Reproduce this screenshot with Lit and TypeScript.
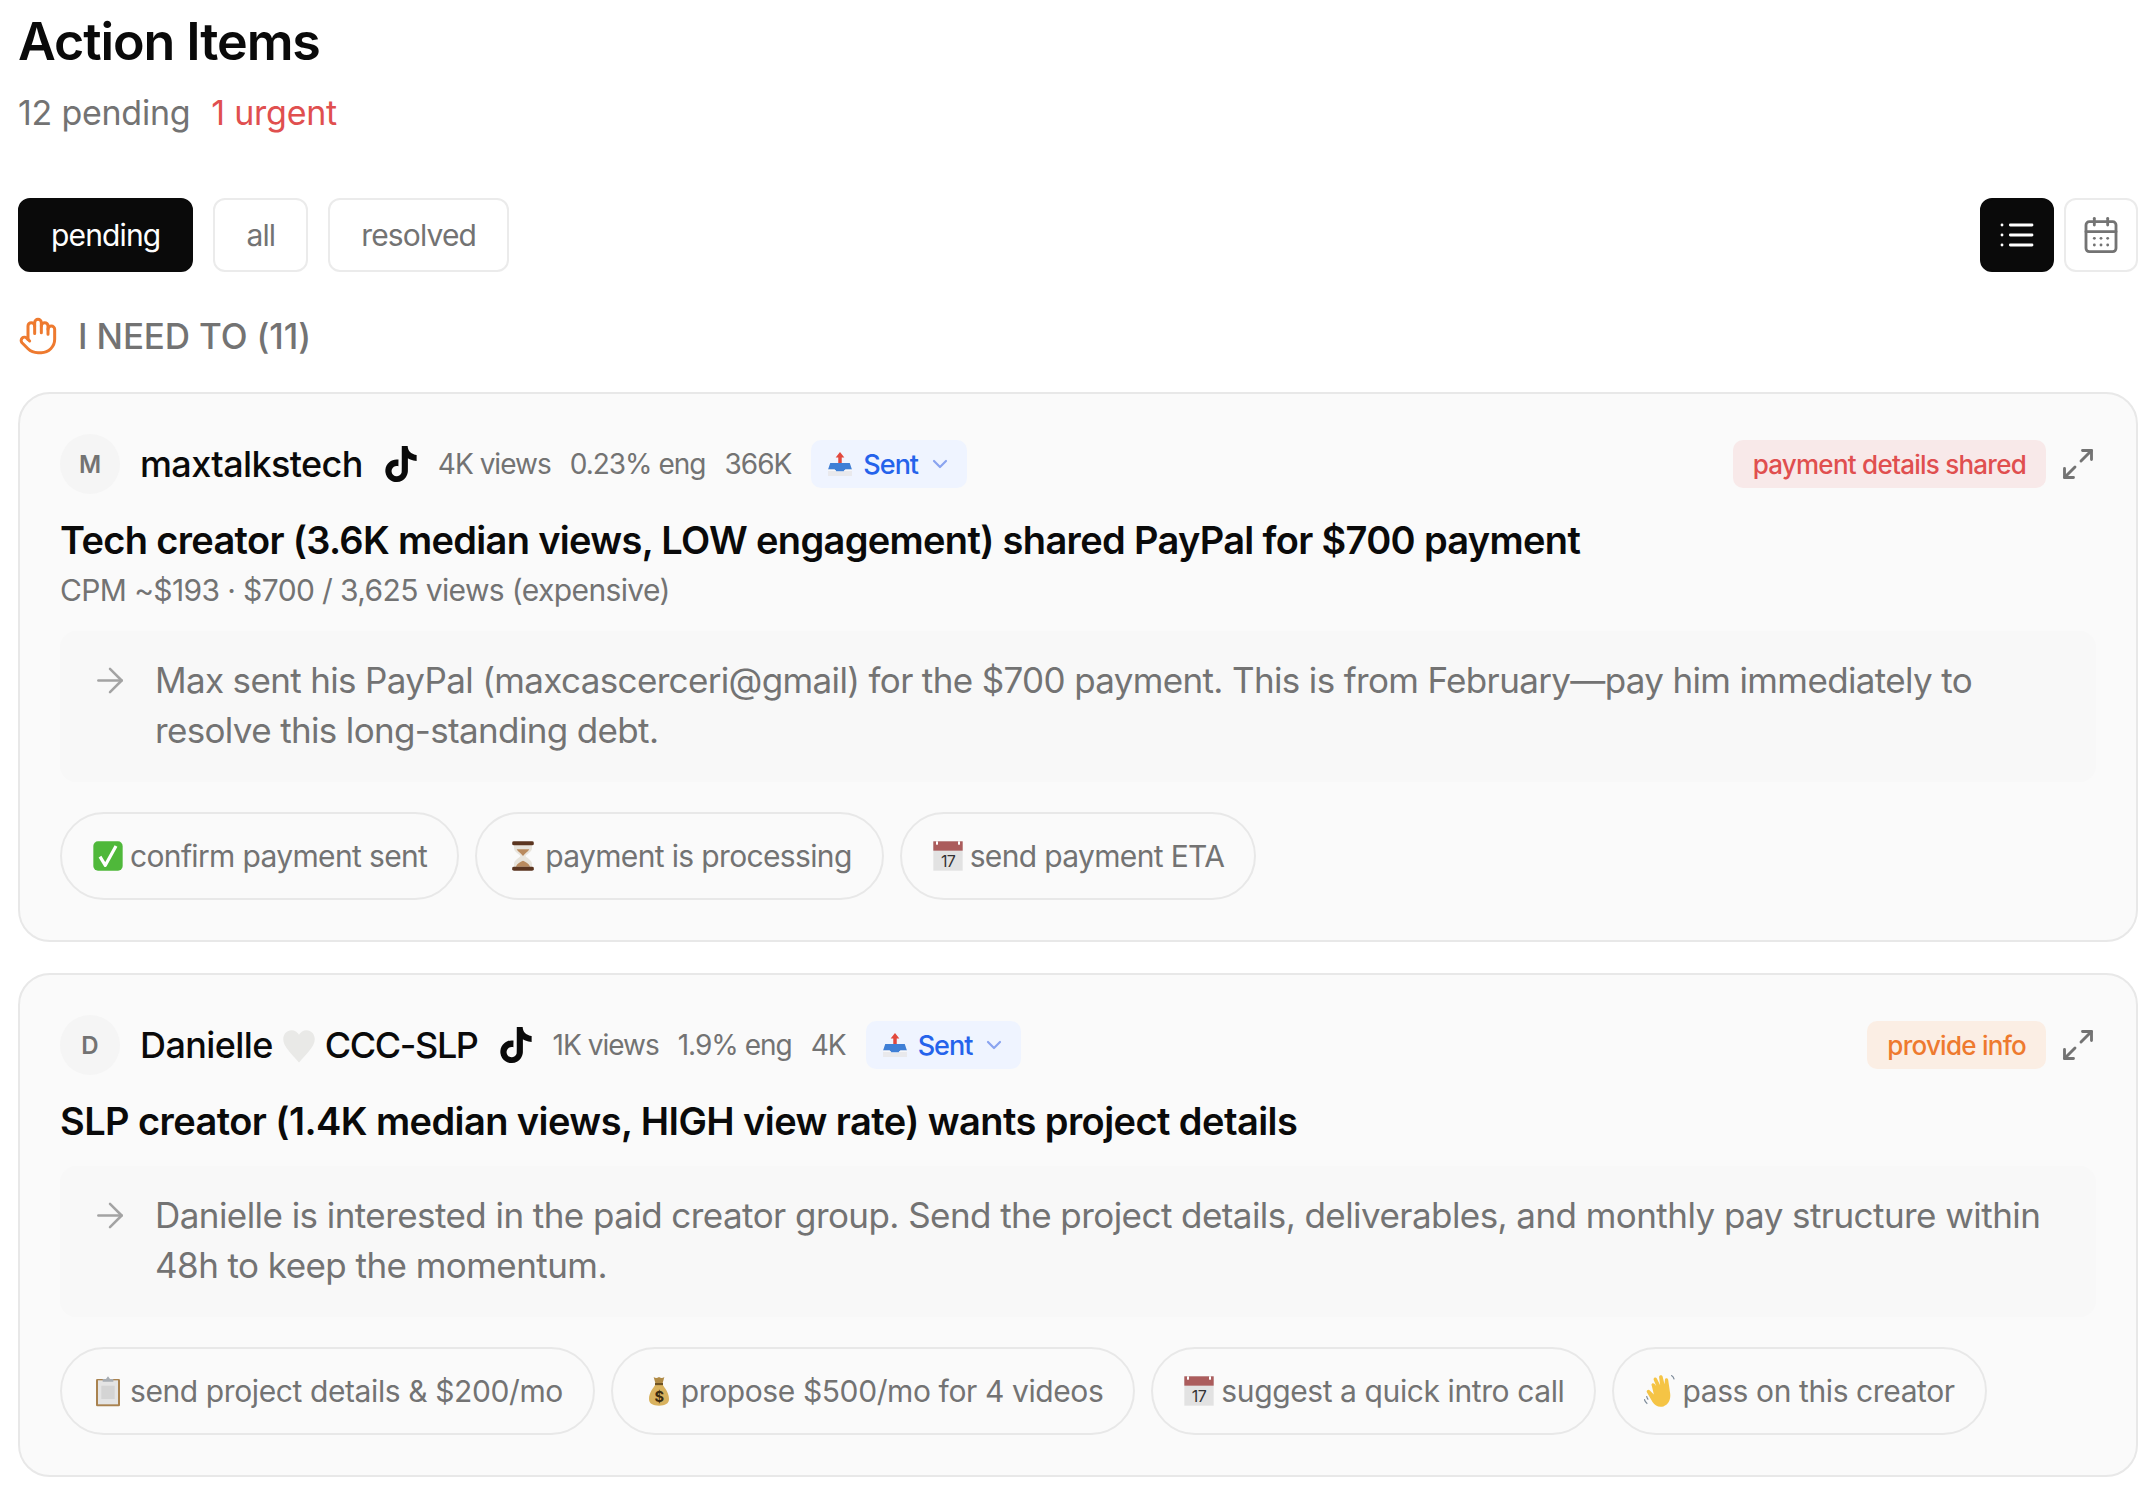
import { LitElement, css, html, svg } from 'lit';
import { customElement } from 'lit/decorators.js';

const emojis: Record<string, unknown> = {
  outbox: svg`
    <path d="M12 1 16 6h-2.400v6h-3.200V6H8z" fill="#e2483d"/>
    <path d="M3 11h18l2 6v6H1v-6z" fill="#e9e9ec"/>
    <path d="M3 11h18l2 6h-6l-2 2H9l-2-2H1z" fill="#3f7fd6"/>
    <path d="M1 17h6l2 2h6l2-2h6v1.400H1z" fill="#f7f7f9"/>`,
  check: svg`
    <rect x="1" y="1" width="22" height="22" rx="3.500" fill="#4fb83a"/>
    <path d="M6 12.500 10 19 18 4.500" fill="none" stroke="#fff" stroke-width="2.400" stroke-linejoin="round"/>`,
  hourglass: svg`
    <g transform="translate(12 0) scale(1.350 1) translate(-12 0)">
      <path d="M7 3h10v3c0 3-3 4.500-3.600 6 .6 1.500 3.600 3 3.600 6v3H7v-3c0-3 3-4.500 3.600-6C10 10.500 7 9 7 6z" fill="#e8e4dc"/>
      <path d="M8.500 7h7c-.6 2-2.600 3-3.500 5-.9-2-2.900-3-3.500-5zM8 20c.8-2.500 2.500-3.500 4-4.500 1.500 1 3.200 2 4 4.500z" fill="#b98a5e"/>
      <rect x="6" y="1" width="12" height="3" rx="1" fill="#5b3520"/>
      <rect x="6" y="20" width="12" height="3" rx="1" fill="#5b3520"/>
    </g>`,
  calendar: svg`
    <rect x="1" y="1" width="22" height="22" fill="#e2e2e2"/>
    <rect x="1" y="1" width="22" height="7" fill="#ab5c5c"/>
    <rect x="3" y="1" width="1.500" height="2.500" fill="#fff"/>
    <rect x="19.500" y="1" width="1.500" height="2.500" fill="#fff"/>
    <text x="12" y="20.500" text-anchor="middle" font-size="12" font-family="Inter, sans-serif" fill="#333">17</text>`,
  clipboard: svg`
    <rect x="3" y="3" width="18" height="20.500" rx="1" fill="#a9824f"/>
    <rect x="4.500" y="4" width="15" height="18" fill="#e4e4e4"/>
    <rect x="7" y="8" width="10" height="10" fill="#d4d4d4"/>
    <path d="M8 5V3h2.500l1.500-2 1.500 2H16v2z" fill="#a8adb3"/>`,
  moneybag: svg`
    <path d="M8 1.500c1.500 1 2.500.8 4 0 1.500.8 2.500 1 4 0L14.500 7h-5z" fill="#b08a45"/>
    <path d="M9.500 7h5c2 3 5 6.500 5 11 0 3.500-3 5-7.500 5s-7.500-1.500-7.500-5c0-4.500 3-8 5-11z" fill="#d9b25e"/>
    <rect x="9" y="6" width="6" height="1.600" fill="#6e5324"/>
    <text x="12" y="20" text-anchor="middle" font-size="11" font-weight="700" font-family="Inter, sans-serif" fill="#3b2b10">$</text>`,
  wave: svg`
    <g transform="translate(12 12) scale(1.120) translate(-12 -12)">
      <path d="M6.500 8.500c-.8-1.200.8-2.400 1.800-1.300L9.500 8.700 7.800 4.600c-.5-1.400 1.400-2.200 2.100-.9l2.200 4.400-.7-5.300c-.2-1.500 2-1.800 2.400-.3l1.200 5 .3-3c.2-1.400 2.100-1.300 2.200.1l1.300 9c.5 4-1 7.500-4.500 8.700-3 1-5.600-.4-7.300-3L3.300 13c-.8-1.200.9-2.500 1.900-1.400l2.700 2.800z" fill="#f5c445"/>
      <path d="M1.500 17.500c.3 1.300 1 2.300 2 3M3 15.500c.2.900.6 1.700 1.100 2.300M19.500 1.500c1 .6 1.700 1.500 2 2.700" fill="none" stroke="#7c8a99" stroke-width=".8"/>
    </g>`,
  heart: svg`
    <path d="M12 23C7 17 1.500 12.500 1.500 7.500 1.500 4 4 1.500 7 1.500c2.200 0 4 1.200 5 3 1-1.800 2.800-3 5-3 3 0 5.500 2.500 5.500 6 0 5-5.500 9.500-10.500 15.500z" fill="#e9e9e7"/>`,
};

const emoji = (name: string) =>
  html`<svg class="emoji" viewBox="0 0 24 24" role="img" aria-label=${name}>${emojis[name]}</svg>`;

const stroke = (cls: string, body: unknown) =>
  html`<svg class=${cls} viewBox="0 0 24 24" fill="none" stroke="currentColor" stroke-linecap="round" stroke-linejoin="round">${body}</svg>`;

const tiktokIcon = html`<svg class="tiktok" viewBox="0 0 24 24" fill="#0a0a0a"><path d="M12.525.02c1.310-.02 2.610-.01 3.910-.02.08 1.530.63 3.090 1.750 4.170 1.120 1.110 2.700 1.620 4.240 1.790v4.030c-1.440-.05-2.890-.35-4.200-.97-.57-.26-1.100-.59-1.620-.93-.01 2.920.01 5.840-.02 8.750-.08 1.400-.54 2.790-1.350 3.940-1.310 1.920-3.580 3.170-5.910 3.210-1.430.08-2.860-.31-4.080-1.030-2.020-1.190-3.440-3.370-3.650-5.710-.02-.5-.03-1-.01-1.490.18-1.900 1.120-3.720 2.580-4.960 1.660-1.440 3.980-2.130 6.150-1.720.02 1.480-.04 2.960-.04 4.440-.99-.32-2.150-.23-3.020.37-.63.41-1.110 1.040-1.360 1.750-.21.51-.15 1.070-.14 1.610.24 1.640 1.820 3.020 3.500 2.870 1.120-.01 2.190-.66 2.770-1.610.19-.33.4-.67.41-1.060.1-1.790.06-3.570.07-5.360.01-4.030-.01-8.050.02-12.070z"/></svg>`;

type Card = {
  initial: string;
  name: unknown;
  views: string;
  eng: string;
  followers: string;
  tag: string;
  tagKind: string;
  title: string;
  sub?: string;
  advice: string;
  chips: [string, string][];
};

const cards: Card[] = [
  {
    initial: 'M',
    name: 'maxtalkstech',
    views: '4K views',
    eng: '0.23% eng',
    followers: '366K',
    tag: 'payment details shared',
    tagKind: 'red',
    title: 'Tech creator (3.6K median views, LOW engagement) shared PayPal for $700 payment',
    sub: 'CPM ~$193 · $700 / 3,625 views (expensive)',
    advice:
      'Max sent his PayPal (maxcascerceri@gmail) for the $700 payment. This is from February—pay him immediately to resolve this long-standing debt.',
    chips: [
      ['check', 'confirm payment sent'],
      ['hourglass', 'payment is processing'],
      ['calendar', 'send payment ETA'],
    ],
  },
  {
    initial: 'D',
    name: html`Danielle ${emoji('heart')} <span class="caps">CCC-SLP</span>`,
    views: '1K views',
    eng: '1.9% eng',
    followers: '4K',
    tag: 'provide info',
    tagKind: 'orange',
    title: 'SLP creator (1.4K median views, HIGH view rate) wants project details',
    advice:
      'Danielle is interested in the paid creator group. Send the project details, deliverables, and monthly pay structure within 48h to keep the momentum.',
    chips: [
      ['clipboard', 'send project details & $200/mo'],
      ['moneybag', 'propose $500/mo for 4 videos'],
      ['calendar', 'suggest a quick intro call'],
      ['wave', 'pass on this creator'],
    ],
  },
];

@customElement('app-root')
export class AppRoot extends LitElement {
  static styles = css`
    :host {
      display: block;
      padding: 0 14px 0 18px;
      background: #fff;
      color: #0a0a0a;
      font-family: Inter, 'Noto Sans', sans-serif;
    }

    h1 {
      margin: 0;
      padding-top: 14px;
      font-size: 52px;
      line-height: 56px;
      font-weight: 600;
      letter-spacing: -1.100px;
    }

    .summary {
      display: flex;
      gap: 21px;
      margin-top: 22px;
      font-size: 34px;
      line-height: 42px;
      letter-spacing: -0.250px;
      color: #737373;
    }

    .urgent {
      color: #e04f4f;
    }

    .toolbar {
      display: flex;
      justify-content: space-between;
      margin-top: 64px;
    }

    .group {
      display: flex;
      gap: 20px;
    }

    .group.views {
      gap: 10px;
    }

    .btn {
      display: flex;
      align-items: center;
      justify-content: center;
      box-sizing: border-box;
      height: 74px;
      padding: 0 31px;
      border: 2px solid #ebebeb;
      border-radius: 12px;
      background: #fff;
      font-size: 30px;
      letter-spacing: -0.850px;
      color: #737373;
    }

    .btn.on {
      background: #0a0a0a;
      border-color: #0a0a0a;
      color: #fff;
    }

    .btn.square {
      width: 74px;
      padding: 0;
    }

    .btn svg {
      width: 40px;
      height: 40px;
      stroke-width: 1.700;
    }

    .section {
      display: flex;
      align-items: center;
      gap: 20px;
      height: 42px;
      margin-top: 43px;
      font-size: 35px;
      font-weight: 500;
      letter-spacing: -0.150px;
      color: #737373;
    }

    .hand {
      width: 40px;
      height: 40px;
      stroke-width: 1.800;
      color: #ee7a2f;
    }

    .card {
      box-sizing: border-box;
      margin-top: 35px;
      padding: 40px;
      border: 2px solid #e8e8e8;
      border-radius: 32px;
      background: #fafafa;
    }

    .card + .card {
      margin-top: 31px;
    }

    .head {
      display: flex;
      align-items: center;
      height: 60px;
    }

    .avatar {
      display: flex;
      align-items: center;
      justify-content: center;
      width: 60px;
      height: 60px;
      border-radius: 50%;
      background: #f5f5f5;
      font-size: 24px;
      font-weight: 600;
      color: #737373;
    }

    .name {
      margin-left: 20px;
      font-size: 36px;
      font-weight: 500;
      letter-spacing: -0.600px;
      white-space: nowrap;
    }

    .name .caps {
      letter-spacing: -1.400px;
    }

    .name .emoji {
      width: 36px;
      height: 36px;
      margin: 0 -1px;
      vertical-align: -6px;
    }

    .tiktok {
      width: 36px;
      height: 36px;
      margin-left: 20px;
    }

    .meta {
      display: flex;
      gap: 19px;
      margin-left: 19px;
      font-size: 28px;
      letter-spacing: -1px;
      color: #737373;
    }

    .sent {
      display: flex;
      align-items: center;
      gap: 10px;
      height: 48px;
      margin-left: 20px;
      padding: 0 15px 0 16px;
      border-radius: 10px;
      background: #eff4ff;
      font-size: 27px;
      font-weight: 500;
      letter-spacing: -1px;
      color: #2563eb;
    }

    .sent .emoji {
      width: 26px;
      height: 26px;
    }

    .chevron {
      width: 24px;
      height: 24px;
      stroke-width: 2.200;
      color: #8aa4f0;
    }

    .tag {
      display: flex;
      align-items: center;
      height: 48px;
      margin-left: auto;
      padding: 0 20px;
      border-radius: 10px;
      font-size: 26px;
      font-weight: 500;
      letter-spacing: -0.750px;
    }

    .tag.red {
      background: #f8e9e9;
      color: #e04f4f;
    }

    .tag.orange {
      background: #fbeee4;
      color: #ee7a2f;
    }

    .expand {
      width: 36px;
      height: 36px;
      margin-left: 14px;
      stroke-width: 1.900;
      color: #737373;
    }

    h2 {
      margin: 22px 0 0;
      font-size: 38px;
      line-height: 48px;
      font-weight: 600;
      letter-spacing: -0.570px;
    }

    .sub {
      margin-top: 6px;
      font-size: 30px;
      line-height: 40px;
      letter-spacing: -0.620px;
      color: #737373;
    }

    .advice {
      display: flex;
      gap: 25px;
      margin-top: 21px;
      padding: 25px 30px 27px;
      border-radius: 16px;
      background: #f8f8f8;
      font-size: 35px;
      line-height: 49.500px;
      letter-spacing: -0.560px;
      color: #737373;
    }

    .arrow {
      flex: none;
      width: 40px;
      height: 49px;
      stroke-width: 1.500;
      color: #a3a3a3;
    }

    .chips {
      display: flex;
      gap: 16px;
      margin-top: 30px;
    }

    .chip {
      display: flex;
      align-items: center;
      gap: 6px;
      height: 88px;
      box-sizing: border-box;
      padding: 0 30px;
      border: 2px solid #e8e8e8;
      border-radius: 44px;
      font-size: 30px;
      letter-spacing: -0.400px;
      color: #737373;
      white-space: nowrap;
    }

    .chip .emoji {
      width: 32px;
      height: 32px;
    }

    /* first card's copy sets a touch tighter than the second's */
    .card.tight h2 {
      letter-spacing: -0.670px;
    }

    .card.tight .advice {
      letter-spacing: -0.650px;
    }

    .card.tight .chip {
      letter-spacing: -0.650px;
    }
  `;

  private renderCard(c: Card) {
    return html`
      <article class="card ${c.sub ? 'tight' : ''}">
        <div class="head">
          <div class="avatar">${c.initial}</div>
          <div class="name">${c.name}</div>
          ${tiktokIcon}
          <div class="meta"><span>${c.views}</span><span>${c.eng}</span><span>${c.followers}</span></div>
          <div class="sent">
            ${emoji('outbox')} Sent
            ${stroke('chevron', svg`<path d="m6 9 6 6 6-6"/>`)}
          </div>
          <div class="tag ${c.tagKind}">${c.tag}</div>
          ${stroke('expand', svg`<path d="M15 3h6v6"/><path d="m21 3-7 7"/><path d="m3 21 7-7"/><path d="M9 21H3v-6"/>`)}
        </div>
        <h2>${c.title}</h2>
        ${c.sub ? html`<div class="sub">${c.sub}</div>` : ''}
        <div class="advice">
          ${stroke('arrow', svg`<path d="M5 12h14"/><path d="m12 5 7 7-7 7"/>`)}
          <div>${c.advice}</div>
        </div>
        <div class="chips">
          ${c.chips.map(([icon, label]) => html`<div class="chip">${emoji(icon)}<span>${label}</span></div>`)}
        </div>
      </article>
    `;
  }

  render() {
    return html`
      <h1>Action Items</h1>
      <div class="summary"><span>12 pending</span><span class="urgent">1 urgent</span></div>
      <div class="toolbar">
        <div class="group">
          <div class="btn on">pending</div>
          <div class="btn">all</div>
          <div class="btn">resolved</div>
        </div>
        <div class="group views">
          <div class="btn square on">
            ${stroke('', svg`<path d="M3 6h.01"/><path d="M3 12h.01"/><path d="M3 18h.01"/><path d="M8 6h13"/><path d="M8 12h13"/><path d="M8 18h13"/>`)}
          </div>
          <div class="btn square">
            ${stroke('', svg`<rect x="3" y="4" width="18" height="18" rx="2"/><path d="M8 2v4"/><path d="M16 2v4"/><path d="M3 10h18"/><path d="M8 14h.01"/><path d="M12 14h.01"/><path d="M16 14h.01"/><path d="M8 18h.01"/><path d="M12 18h.01"/><path d="M16 18h.01"/>`)}
          </div>
        </div>
      </div>
      <div class="section">
        ${stroke('hand', svg`<path d="M18 11V6a2 2 0 0 0-2-2a2 2 0 0 0-2 2"/><path d="M14 10V4a2 2 0 0 0-2-2a2 2 0 0 0-2 2v2"/><path d="M10 10.500V6a2 2 0 0 0-2-2a2 2 0 0 0-2 2v8"/><path d="M18 8a2 2 0 1 1 4 0v6a8 8 0 0 1-8 8h-2c-2.800 0-4.500-.86-5.990-2.340l-3.600-3.600a2 2 0 0 1 2.830-2.820L7 15"/>`)}
        <span>I NEED TO (11)</span>
      </div>
      ${cards.map((c) => this.renderCard(c))}
    `;
  }
}
